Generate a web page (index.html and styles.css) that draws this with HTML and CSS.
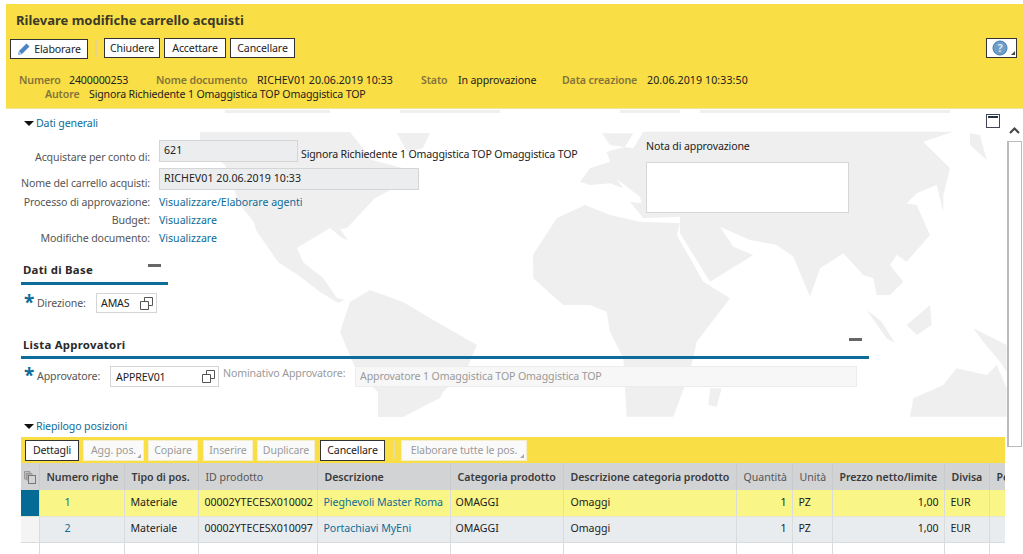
FILE: index.html
```html
<!DOCTYPE html>
<html lang="it">
<head>
<meta charset="utf-8">
<title>Rilevare modifiche carrello acquisti</title>
<link rel="stylesheet" href="styles.css">
</head>
<body>
<svg class="map" width="1023" height="554" viewBox="0 0 1023 554" aria-hidden="true">
  <g class="land">
    <rect x="225" y="110" width="105" height="3"/><rect x="400" y="110" width="100" height="3"/><rect x="620" y="110" width="60" height="3"/><rect x="700" y="110" width="250" height="3"/>
    <path d="M200,132H350L358,142L372,160L410,170L420,175L375,198L347,228L340,229L348,240L342,238L330,228L297,248L303,262L323,278L337,298L345,300L338,303L320,292L298,275L278,262L256,230L254,222L240,205L225,165L200,145Z"/>
    <path d="M350,302L370,290L403,302L430,318L477,345L467,368L443,392L440,398L403,417H378V392L357,372L340,332Z"/>
    <path d="M397,133H430L423,148L407,152Z"/>
    <g transform="translate(590 105) scale(.33333)">
      <path d="M-171,450L-100,340L-15,300L60,330L150,350L270,355L260,390L340,530L420,580L320,710L300,800L250,935H110L100,760L60,680L50,620L0,600H-80L-170,520Z"/>
      <path d="M36,85H130L105,125L50,140L60,170L0,190L-30,230L0,240L60,235L100,250L80,222L150,275L155,295L120,290L160,340L270,335L270,385L360,530L490,450L430,425L390,365L480,405L560,420L610,455L660,575L690,490L760,445L820,510L850,520L860,570L900,570L940,530L900,480L920,450L950,470L1020,390L980,300L950,295L980,265L1040,240L1060,320L1060,270L1080,190L1000,110L1090,80H160L130,130L60,120Z"/>
      <path d="M1140,85L1170,90L1190,165L1140,120Z"/>
      <path d="M830,615L875,650L915,715L890,700Z"/>
      <path d="M950,660L1020,600L1025,660L980,690Z"/>
      <path d="M1150,670L1250,720V800L1230,770L1180,710Z"/>
      <path d="M960,935L970,880L1060,840L1100,790L1190,810L1220,780L1250,850V935Z"/>
      <path d="M395,850L380,905L355,900L360,850Z"/>
    </g>
  </g>
</svg>
<header class="hdr">
  <h1 class="title">Rilevare modifiche carrello acquisti</h1>
  <div class="hdr-bar">
    <button class="btn btn-edit" type="button">
      <svg class="ico-pen" width="14" height="14" viewBox="0 0 14 14"><path d="M1,13L2,9L9.500,1.500L12.500,4.500L5,12Z" fill="#4a86c5"/><path d="M1,13L2,9L5,12Z" fill="#a8c6e6"/></svg>
      Elaborare
    </button>
    <span class="sep sep-hdr"></span>
    <button class="btn" type="button">Chiudere</button>
    <button class="btn" type="button">Accettare</button>
    <button class="btn" type="button">Cancellare</button>
    <button class="btn btn-help" type="button" aria-label="Aiuto">
      <svg width="16" height="16" viewBox="0 0 16 16"><circle cx="8" cy="8" r="7" fill="#6f9fc9" stroke="#3f79ad"/><text class="help-q" x="8" y="11.500">?</text></svg>
      <span class="corner"></span>
    </button>
  </div>
  <div class="info">
    <div class="info-row">
      <span class="k k-num">Numero</span><span class="v v-num">2400000253</span>
      <span class="k k-doc">Nome documento</span><span class="v v-doc">RICHEV01 20.06.2019 10:33</span>
      <span class="k k-st">Stato</span><span class="v v-st">In approvazione</span>
      <span class="k k-dt">Data creazione</span><span class="v v-dt">20.06.2019 10:33:50</span>
    </div>
    <div class="info-row info-row2">
      <span class="k k-au">Autore</span><span class="v v-au">Signora Richiedente 1 Omaggistica TOP Omaggistica TOP</span>
    </div>
  </div>
</header>
<div class="body-row">
  <main class="content">
    <div class="disc disc-gen">
      <a class="disc-link"><span class="tri"></span>Dati generali</a>
      <svg class="win-ico" width="14" height="14" viewBox="0 0 14 14"><rect x=".5" y=".5" width="13" height="13" fill="#fff" stroke="#445"/><rect x="2" y="2" width="10" height="2" fill="#234"/></svg>
    </div>
    <section class="general">
      <div class="form">
        <label class="lab lab-1">Acquistare per conto di:</label>
        <div class="val-row"><span class="inp inp-ro inp-s">621</span><span class="after">Signora Richiedente 1 Omaggistica TOP Omaggistica TOP</span></div>
        <label class="lab lab-2">Nome del carrello acquisti:</label>
        <div class="val-row"><span class="inp inp-ro inp-l">RICHEV01 20.06.2019 10:33</span></div>
        <label class="lab">Processo di approvazione:</label>
        <a class="lnk">Visualizzare/Elaborare agenti</a>
        <label class="lab">Budget:</label>
        <a class="lnk">Visualizzare</a>
        <label class="lab">Modifiche documento:</label>
        <a class="lnk">Visualizzare</a>
      </div>
      <div class="note">
        <div class="note-lab">Nota di approvazione</div>
        <div class="note-box"></div>
      </div>
    </section>
    <section class="group group-base">
      <h2 class="group-t">Dati di Base<span class="minus"></span></h2>
    </section>
    <div class="req-row req-dir">
      <span class="star">*</span><span class="req-lab req-lab-d">Direzione:</span>
      <span class="inp-w inp-dir">AMAS<svg class="copy" width="13" height="13" viewBox="0 0 13 13"><path d="M.5,4.500H8.500V12.500H.5ZM4.500,4.500V.5H12.500V8.500H8.500" fill="none" stroke="#555"/></svg></span>
    </div>
    <section class="group group-app">
      <h2 class="group-t">Lista Approvatori<span class="minus"></span></h2>
    </section>
    <div class="req-row req-app">
      <span class="star">*</span><span class="req-lab req-lab-a">Approvatore:</span>
      <span class="inp-w inp-app">APPREV01<svg class="copy" width="13" height="13" viewBox="0 0 13 13"><path d="M.5,4.500H8.500V12.500H.5ZM4.500,4.500V.5H12.500V8.500H8.500" fill="none" stroke="#555"/></svg></span>
      <span class="nom-lab">Nominativo Approvatore:</span>
      <span class="nom-val">Approvatore 1 Omaggistica TOP Omaggistica TOP</span>
    </div>
    <div class="disc disc-rie">
      <a class="disc-link"><span class="tri"></span>Riepilogo posizioni</a>
    </div>
    <div class="tb">
      <button class="btn btn-t btn-det" type="button">Dettagli</button>
      <button class="btn btn-t btn-off btn-agg" type="button">Agg. pos.<span class="corner corner-off"></span></button>
      <button class="btn btn-t btn-off btn-cop" type="button">Copiare</button>
      <button class="btn btn-t btn-off btn-ins" type="button">Inserire</button>
      <button class="btn btn-t btn-off btn-dup" type="button">Duplicare</button>
      <button class="btn btn-t btn-can" type="button">Cancellare</button>
      <span class="sep sep-tb"></span>
      <button class="btn btn-t btn-off btn-all" type="button">Elaborare tutte le pos.<span class="corner corner-off"></span></button>
    </div>
    <table class="grid">
      <colgroup>
        <col class="c0"><col class="c1"><col class="c2"><col class="c3"><col class="c4"><col class="c5"><col class="c6"><col class="c7"><col class="c8"><col class="c9"><col class="c10"><col class="c11">
      </colgroup>
      <thead>
        <tr>
          <th class="sel-h"><svg width="12" height="13" viewBox="0 0 12 13"><path d="M.5,.5H6V3H3V8H.5ZM2.500,2.500H8V5H5V9H2.500Z" fill="#bbb" stroke="#999"/><rect x="4.500" y="4.500" width="7" height="8" fill="#d2d3d5" stroke="#777"/></svg></th>
          <th>Numero righe</th><th>Tipo di pos.</th><th class="th-n">ID prodotto</th><th>Descrizione</th><th>Categoria prodotto</th><th>Descrizione categoria prodotto</th><th class="th-n">Quantità</th><th class="th-n">Unità</th><th>Prezzo netto/limite</th><th>Divisa</th><th>Pe</th>
        </tr>
      </thead>
      <tbody>
        <tr class="r-sel">
          <td class="sel sel-on"></td><td class="num"><a class="lnk">1</a></td><td>Materiale</td><td>00002YTECESX010002</td><td><a class="lnk">Pieghevoli Master Roma</a></td><td>OMAGGI</td><td>Omaggi</td><td class="right">1</td><td>PZ</td><td class="right">1,00</td><td>EUR</td><td></td>
        </tr>
        <tr class="r-alt">
          <td class="sel"></td><td class="num"><a class="lnk">2</a></td><td>Materiale</td><td>00002YTECESX010097</td><td><a class="lnk">Portachiavi MyEni</a></td><td>OMAGGI</td><td>Omaggi</td><td class="right">1</td><td>PZ</td><td class="right">1,00</td><td>EUR</td><td></td>
        </tr>
        <tr class="r-empty">
          <td></td><td></td><td></td><td></td><td></td><td></td><td></td><td></td><td></td><td></td><td></td><td></td>
        </tr>
      </tbody>
    </table>
  </main>
  <aside class="scroll">
    <svg class="chev" width="11" height="7" viewBox="0 0 11 7"><path d="M1,6L5.500,1.500L10,6" fill="none" stroke="#444" stroke-width="2"/></svg>
    <div class="thumb"></div>
  </aside>
</div>
</body>
</html>
```
FILE: styles.css
```css
* { box-sizing: border-box; }
html, body { margin: 0; height: 554px; overflow: hidden; background: #fff; }
body {
  padding: 4px 0 0 6px;
  font-family: "Noto Sans", "Open Sans", sans-serif;
  font-size: 10.6px;
  letter-spacing: -.13px;
  color: #222;
  position: relative;
}
.map { position: absolute; left: 0; top: 0; z-index: 0; }
.land { fill: #efefef; }
.hdr, .body-row { position: relative; z-index: 1; }

/* header */
.hdr { height: 105px; background: #f9de45; padding: 0 6px 0 4px; border-bottom: 1px solid #efe7a0; }
.title { margin: 0; padding: 8px 0 0 6px; height: 34px; font-size: 13px; line-height: 16px; font-weight: 700; color: #3a3a2a; letter-spacing: 0; }
.hdr-bar { display: flex; align-items: flex-start; height: 21px; }
.btn {
  font: inherit; letter-spacing: inherit; color: #222; background: #fff; border: 1px solid #333;
  height: 20px; padding: 0; position: relative; display: inline-flex;
  align-items: center; justify-content: center; margin-right: 4px;
}
.btn-edit { width: 78px; margin-top: 1px; gap: 3px; margin-right: 7px; }
.sep { display: block; width: 2px; background: #e9d28a; }
.sep-hdr { height: 17px; margin: 2px 7px 0 0; }
.hdr-bar .btn:nth-of-type(2) { width: 56px; }
.hdr-bar .btn:nth-of-type(3) { width: 62px; }
.hdr-bar .btn:nth-of-type(4) { width: 65px; }
.btn-help { width: 31px; margin: 0 0 0 auto; justify-content: flex-start; padding-left: 5px; }
.help-q { font-size: 11px; font-weight: 700; fill: #dbe8f3; text-anchor: middle; }
.corner { position: absolute; right: 1px; bottom: 2px; width: 0; height: 0; border-left: 4px solid transparent; border-bottom: 4px solid #444; }
.corner-off { border-bottom-color: #aaa; right: 2px; bottom: 2px; }

.info { padding-top: 14px; }
.info-row { display: flex; height: 14px; line-height: 14px; white-space: nowrap; }
.k { font-weight: 600; color: #84743a; }
.k-num { margin-left: 9px; width: 50px; }
.v-num { width: 87px; }
.k-doc { width: 101px; }
.v-doc { width: 164px; letter-spacing: 0; }
.k-st { width: 37px; }
.v-st { width: 104px; }
.k-dt { width: 85px; }
.v-dt { letter-spacing: .1px; }
.k-au { margin-left: 35px; width: 44px; }
.v-au { letter-spacing: -.16px; }

/* main */
.body-row { display: flex; height: 445px; overflow: hidden; }
.content { width: 1000px; padding-left: 15px; flex: none; }
.disc { display: flex; justify-content: space-between; align-items: center; height: 18px; }
.disc-gen { margin-top: 5px; padding-right: 6px; }
.disc-rie { margin-top: 30px; }
.disc-link { color: #0d6c99; display: inline-flex; align-items: center; }
.tri { width: 0; height: 0; border-left: 5px solid transparent; border-right: 5px solid transparent; border-top: 5px solid #111; margin: 0 2px 0 3px; }
.win-ico { display: block; margin-top: -4px; }

.general { display: flex; margin-top: 8px; height: 107px; }
.form { width: 625px; display: grid; grid-template-columns: 129px 1fr; grid-template-rows: 22px 28px 20px 18px 18px; column-gap: 9px; flex: none; }
.lab { text-align: right; color: #555; white-space: nowrap; line-height: 16px; align-self: end; }
.lab-1 { margin-bottom: -3px; }
.lab-2 { margin-bottom: -1px; }
.val-row { display: flex; align-items: flex-start; align-self: end; }
.form > .lnk { align-self: end; line-height: 16px; letter-spacing: -.02px; }
.lnk { color: #0d6c99; }
.inp { display: block; height: 22px; padding: 1px 4px; line-height: 16px; white-space: nowrap; letter-spacing: .05px; }
.inp-ro { background: #ebedef; border: 1px solid #d3d5d6; }
.inp-s { width: 139px; }
.inp-l { width: 260px; }
.after { margin: 6px 0 0 3px; line-height: 16px; white-space: nowrap; color: #222; letter-spacing: -.16px; }
.note { margin-top: -2px; }
.note-lab { line-height: 16px; height: 24px; }
.note-box { width: 203px; height: 51px; background: #fff; border: 1px solid #d7d7d7; }

.group { height: 23px; }
.group-base { width: 147px; margin-top: 15px; border-bottom: 3px solid #0d6c99; }
.group-app { width: 848px; margin-top: 23px; border-bottom: 3px solid #0d6c99; }
.group-t { margin: 0; padding: 0 7px 0 2px; height: 20px; display: flex; justify-content: space-between; align-items: flex-start; font-size: 11.4px; line-height: 16px; font-weight: 700; color: #2a2a2a; letter-spacing: .25px; }
.group-app .group-t { padding-top: 1px; }
.minus { width: 13px; height: 3px; background: #666; margin-top: 2px; }
.group-app .minus { margin-top: 1px; }

.req-row { display: flex; align-items: flex-start; position: relative; white-space: nowrap; }
.req-dir { margin-top: 8px; height: 20px; }
.req-app { margin-top: 7px; height: 21px; }
.star { color: #0d6c99; font-size: 19px; line-height: 20px; width: 16px; text-align: center; font-weight: 700; height: 18px; margin-top: -1px; }
.req-lab { color: #555; line-height: 18px; margin-top: 1px; }
.req-lab-d { width: 59px; }
.req-lab-a { width: 73px; }
.inp-w { display: flex; justify-content: space-between; align-items: center; background: #fff; border: 1px solid #d5d5d5; height: 100%; padding: 0 3px 0 4px; }
.inp-dir { width: 61px; }
.inp-app { width: 109px; padding-left: 5px; }
.nom-lab { color: #999; margin-left: 4px; line-height: 14px; width: 132px; }
.nom-val { width: 502px; height: 21px; line-height: 19px; padding-left: 4px; background: #f7f7f7; border: 1px solid #ececec; color: #9a9a9a; }

/* table toolbar */
.tb { margin-top: 2px; width: 984px; height: 26px; background: #f9de45; display: flex; align-items: center; padding-left: 4px; }
.btn-t { height: 21px; margin-right: 4px; }
.btn-off { background: #fafafa; border-color: #f4eeca; color: #9a9a9a; }
.btn-det { width: 54px; }
.btn-agg { width: 61px; }
.btn-cop { width: 50px; margin-right: 5px; }
.btn-ins { width: 50px; }
.btn-dup { width: 58px; margin-right: 5px; }
.btn-can { width: 65px; margin-right: 8px; }
.sep-tb { height: 18px; margin-right: 6px; background: #e8dca0; }
.btn-all { width: 126px; }

/* table */
.grid { width: 984px; table-layout: fixed; border-collapse: collapse; letter-spacing: -.04px; }
.c0 { width: 18px; } .c1 { width: 85px; } .c2 { width: 74px; } .c3 { width: 119px; }
.c4 { width: 133px; } .c5 { width: 113px; } .c6 { width: 173px; } .c7 { width: 56px; }
.c8 { width: 40px; } .c9 { width: 112px; } .c10 { width: 45px; } .c11 { width: 16px; }
.grid th, .grid td { height: 26px; padding: 0 6px 2px; white-space: nowrap; overflow: hidden; text-align: left; border-right: 1px solid #d9dbdd; border-bottom: 1px solid #d9dbdd; }
.grid th { height: 27px; background: #d2d3d5; font-weight: 600; color: #3a3a3a; border-right-color: #c8cacc; border-bottom: 0; font-size: 10.6px; padding-top: 1px; padding-bottom: 0; }
.grid th:nth-child(n+2) { padding-left: 7px; }
.grid th:nth-child(12) { border-right: 0; }
.grid .th-n { font-weight: 400; color: #555; padding-left: 8px; }
.grid .sel-h { padding: 0 0 0 3px; }
.sel-h svg { display: block; margin-top: 2px; }
.r-sel td { background: #f9f586; border-bottom-color: #e5e5d0; }
.r-alt td { background: #e9ecef; }
.r-empty td { background: transparent; border-bottom: 0; }
.grid td.sel { padding: 0; background: #f4f4f4; }
.grid td.sel-on { background: #036b96; }
.grid td.num { text-align: center; padding: 0 28px 2px 0; }
.grid td.right { text-align: right; padding-right: 5px; }
.grid td:nth-child(7) { padding-left: 7px; }
.grid td:nth-child(6) { padding-left: 5px; }
.grid td:last-child { border-right: 0; }

/* scrollbar */
.scroll { width: 17px; flex: none; display: flex; flex-direction: column; align-items: center; }
.chev { margin-top: 18px; flex: none; }
.thumb { margin-top: 7px; width: 15px; height: 306px; background: #fff; border: 1px solid #bbb; border-left-width: 2px; flex: none; }
```
